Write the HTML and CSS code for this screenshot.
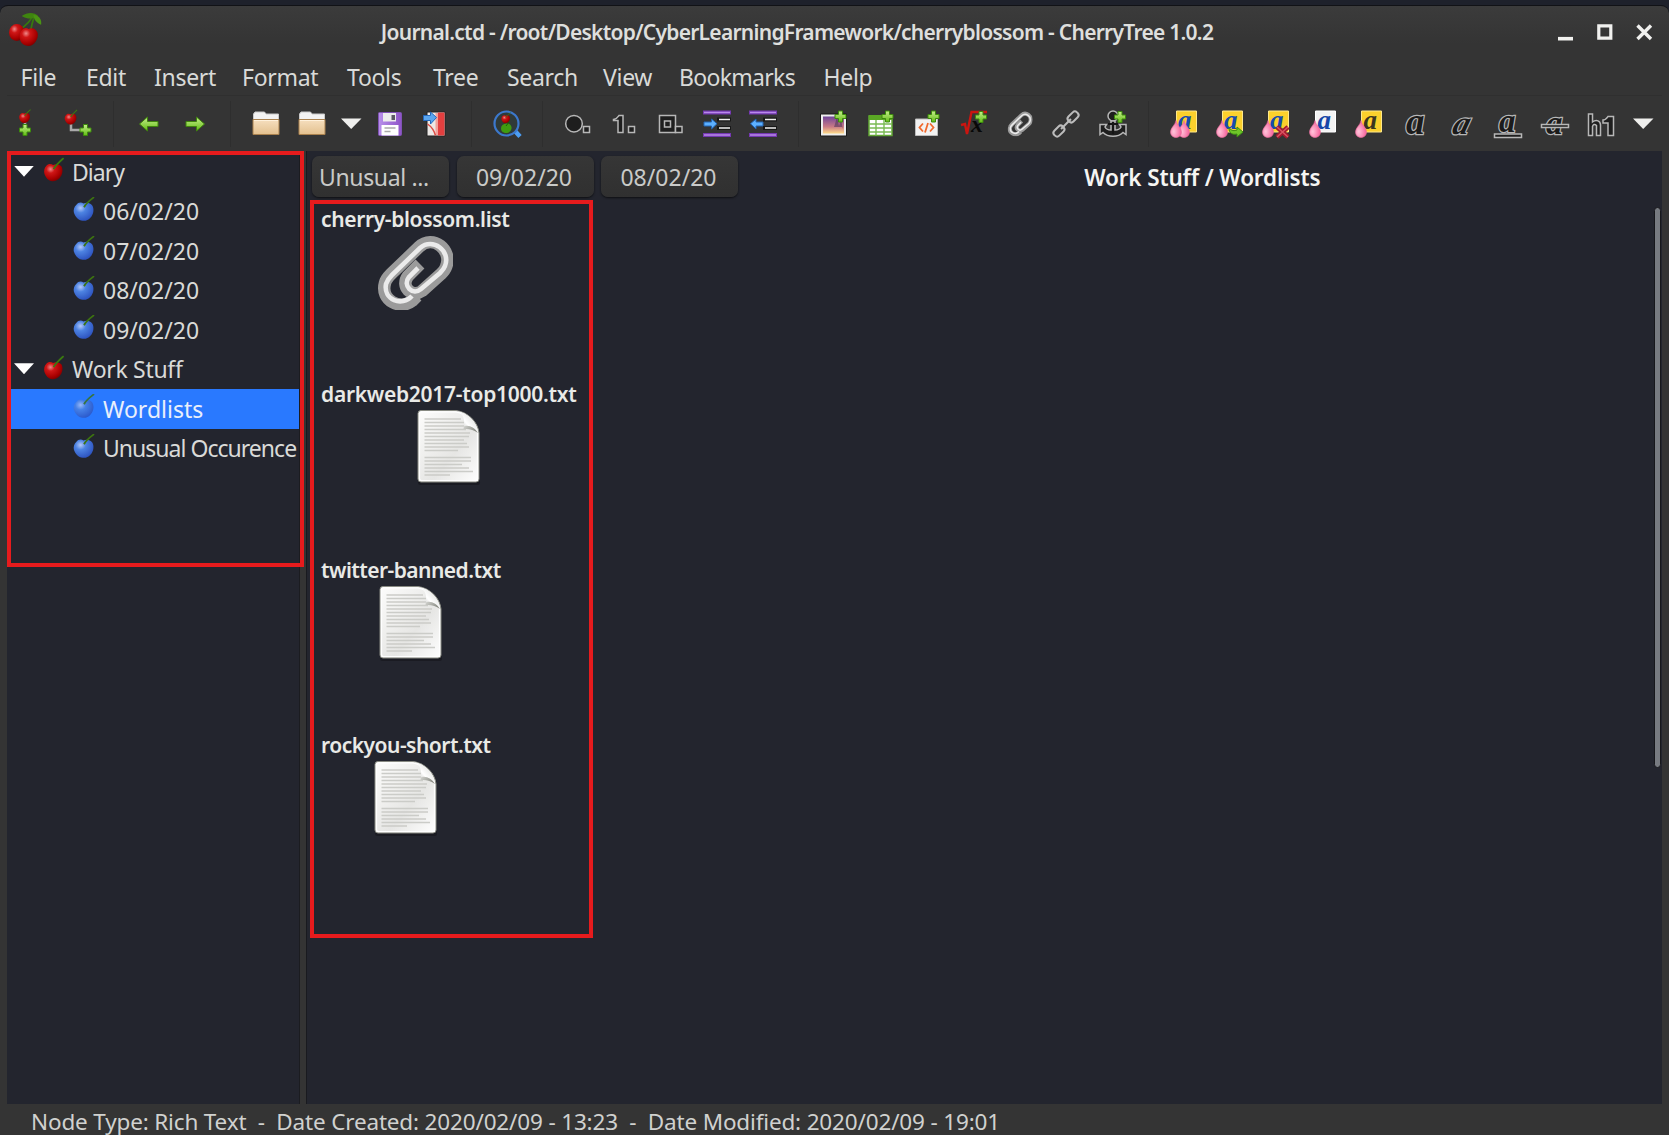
FILE: index.html
```
<!DOCTYPE html>
<html lang="en">
<head>
<meta charset="utf-8">
<title>Journal.ctd - CherryTree 1.0.2</title>
<link rel="stylesheet" href="styles.css">
</head>
<body>
<svg class="defs" aria-hidden="true">
  <defs>
    <radialGradient id="gRed" cx=".35" cy=".3" r=".75"><stop offset="0" stop-color="#f08a8a"/><stop offset=".3" stop-color="#cf1616"/><stop offset=".75" stop-color="#a80000"/><stop offset="1" stop-color="#700"/></radialGradient>
    <radialGradient id="gBlue" cx=".35" cy=".3" r=".75"><stop offset="0" stop-color="#b4c9f8"/><stop offset=".35" stop-color="#4d83e2"/><stop offset="1" stop-color="#2b50bd"/></radialGradient>
    <radialGradient id="gPink" cx=".3" cy=".65" r=".6"><stop offset="0" stop-color="#ffc4da"/><stop offset="1" stop-color="#f76da2"/></radialGradient>
    <linearGradient id="gGreen" x2="0" y2="1"><stop offset="0" stop-color="#c6ee8c"/><stop offset="1" stop-color="#62bd14"/></linearGradient>
    <linearGradient id="gFolder" x2="0" y2="1"><stop offset="0" stop-color="#f6dfbf"/><stop offset="1" stop-color="#e3c08e"/></linearGradient>
    <linearGradient id="gImg" x2="0" y2="1"><stop offset="0" stop-color="#70459a"/><stop offset=".6" stop-color="#c97a86"/><stop offset="1" stop-color="#ffdc8a"/></linearGradient>
    <linearGradient id="gPage" x2="1" y2="1"><stop offset="0" stop-color="#fdfdfc"/><stop offset=".6" stop-color="#e6e6e4"/><stop offset="1" stop-color="#fff"/></linearGradient>
    <linearGradient id="gFold" x1="0" y1=".6" x2=".7" y2="0"><stop offset="0" stop-color="#c4c5c1"/><stop offset=".4" stop-color="#fff"/><stop offset="1" stop-color="#dcddda"/></linearGradient>
    <linearGradient id="gShade" x2="1" y2=".4"><stop offset="0" stop-color="#d4d5d1"/><stop offset="1" stop-color="#85877f"/></linearGradient>
    <linearGradient id="gPurple" x2="1" y2="0"><stop offset="0" stop-color="#b890ea"/><stop offset="1" stop-color="#8e54c8"/></linearGradient>
    <symbol id="plus" viewBox="0 0 14 14"><path d="M5 1.500h4V5h3.500v4H9v3.500H5V9H1.500V5H5z" fill="url(#gGreen)" stroke="#3c8a0c"/></symbol>
    <symbol id="cherry" viewBox="0 0 24 28"><path d="M3.500 9.500C5.500 7 9 7 11 8.500c3-1.600 6.500-1 9 1.500 2.200 3.500 1.500 9.500-2 13-2.500 2.700-5.500 3.500-8 3.200C6 25.800 3 22.500 1.500 18c-.8-3 0-6.500 2-8.500z" fill="url(#gRed)"/><path d="M11.500 13C14 8.500 17 6 22.500 1" fill="none" stroke="#3a7a10" stroke-width="1.900"/></symbol>
    <symbol id="berry" viewBox="0 0 24 28"><path d="M3.500 8.500C5.500 5.500 9 5 11.500 7c3-1.800 7-1.200 9.500 2 2.200 3.500 1.800 9.500-2 13.500-2.700 3-5.500 3.700-8.500 3.200C6 25.500 2.500 21.500 1 17c-.8-3 .3-6.500 2.500-8.500z" fill="url(#gBlue)"/><path d="M12 11c2-4 5-6.500 11-11" fill="none" stroke="#3d7410" stroke-width="1.900"/></symbol>
    <symbol id="drop" viewBox="0 0 12 18"><path d="M6 .5C6.500 5 11.500 7.500 11.500 12c0 3.300-2.500 5.500-5.500 5.500S.5 15.300.5 12C.5 7.500 5.500 5 6 .5z" fill="url(#gPink)" stroke="#e8689a" stroke-width=".6"/></symbol>
    <symbol id="folder" viewBox="0 0 28 28"><path d="M1.500 4 3 2h9.500l1.500 2h12.500v9h-25z" fill="#f3f3f3" stroke="#c9c9c9"/><path d="M1 9.500h26V24.500H1z" fill="url(#gFolder)" stroke="#a9814e"/><path d="M2 10.500h24" stroke="#fff1dc"/></symbol>
    <symbol id="clip" viewBox="0 0 76 76"><g fill="none"><path d="M40 62L35 67C24 76 3 67 8 49c1-4 3-6 6-9l28-27C56 0 76 16 69 33c-1 3-3 5-5 7L45 57C35 64 23 53 31 42l12-12" stroke="#9b9b9b" stroke-width="12.500"/><path d="M35 62C25 73 6 66 9 50c1-3 3-6 6-9l28-27C56 3 74 17 68 32c-1 3-3 5-5 7L44 55C36 62 25 52 32 43l9-9" stroke="#ebebeb" stroke-width="4.600"/></g></symbol>
    <symbol id="doc" viewBox="0 0 66 78"><rect x="2" y="71" width="62" height="5" rx="2.500" fill="#1a1b22"/><path d="M5 1.500h35C52 3 62 13 63 24v46q0 3-3 3H5q-3 0-3-3V4.500q0-3 3-3z" fill="url(#gPage)" stroke="#888a82"/><path d="M5.500 3H40C51 5 60 14 61.500 24v45.500q0 2-2 2h-54q-2 0-2-2V5q0-2 2-2z" fill="none" stroke="#fff" stroke-width="1.200"/><path d="M8.500 10H45M8.500 13.500H48M8.500 17H49M8.500 20.500H50M8.500 24H54M8.500 27.500H53M8.500 31H48M8.500 34.500H51M8.500 38H53M8.500 41.500H42M8.500 48.500H55M8.500 52H55M8.500 55.500H46M8.500 59H53M8.500 62.500H57M8.500 66H34" stroke="#cbccc8" stroke-width="1.400"/><path d="M41 2C48 5 48.500 10 48 17.500c5-1 10 1 14 6C60 12 52 4 41 2z" fill="url(#gFold)"/><path d="M47.500 20c0-1.500.3-2.500 1.500-3 5-1 10 2 13 7-4-3-9-4.500-14.500-4z" fill="url(#gShade)"/></symbol>
    <symbol id="yellowA" viewBox="0 0 28 28"><path d="M6.500 1h20v21h-20z" fill="#fbd02c" stroke="#ffe889"/><text x="8" y="18.500" class="ga" fill="#174bab">a</text></symbol>
  </defs>
</svg>

<div class="window">
  <header class="titlebar">
    <svg class="logo" viewBox="0 0 36 36"><path d="M11 17C17 13 22 9 24 3M22 20c1-6 2-11 4-16" fill="none" stroke="#37790d" stroke-width="1.800"/><path d="M13 3c6-4 13-4 17 0-5 3-10 4-17 0z" fill="#3f850f"/><path d="M25 2c6 0 9 5 8 10-5-2-7-5-8-10z" fill="#4a9413"/><ellipse cx="8" cy="20" rx="8" ry="8.700" fill="url(#gRed)"/><path d="M13 18c3-3 5-3 7-1.500 4-2 8 0 9.500 4 1 6-3 13-9.500 13.500-5 0-9-4-9-9 0-3 0-5 2-7z" fill="url(#gRed)"/></svg>
    <h1 class="title">Journal.ctd - /root/Desktop/CyberLearningFramework/cherryblossom - CherryTree 1.0.2</h1>
    <div class="controls">
      <svg viewBox="0 0 90 18"><path d="M1 15.700h15" stroke="#f1f1ef" stroke-width="3.600"/><path d="M41.800 2.800h12v12.400h-12z" fill="none" stroke="#f1f1ef" stroke-width="3.200"/><path d="M80.500 2.500 94 16M94 2.500 80.500 16" stroke="#f1f1ef" stroke-width="3.400"/></svg>
    </div>
  </header>

  <nav class="menubar"><span>File</span><span>Edit</span><span>Insert</span><span>Format</span><span>Tools</span><span>Tree</span><span>Search</span><span>View</span><span class="tight">Bookmarks</span><span>Help</span></nav>

  <div class="toolbar">
    <svg class="t" viewBox="0 0 28 28"><path d="M8 12v6" stroke="#aaa" stroke-width="2.500"/><use href="#cherry" x="1" y="-1" width="14" height="15"/><use href="#plus" x="1" y="13" width="14" height="14"/></svg>
    <svg class="t" viewBox="0 0 28 28"><path d="M7 12v8h9" stroke="#aaa" stroke-width="2.500" fill="none"/><use href="#cherry" x="0" y="-1" width="14" height="17"/><use href="#plus" x="14.500" y="13" width="14" height="14"/></svg>
    <i></i>
    <svg class="t" viewBox="0 0 28 28"><path d="M4.500 14l8-7v4.500H23v5H12.500V21z" fill="url(#gGreen)" stroke="#3f830d"/></svg>
    <svg class="t" viewBox="0 0 28 28"><path d="M23.500 14l-8-7v4.500H5v5h10.500V21z" fill="url(#gGreen)" stroke="#3f830d"/></svg>
    <i></i>
    <svg class="t" viewBox="0 0 28 28"><use href="#folder"/></svg>
    <svg class="t" viewBox="0 0 28 28"><use href="#folder"/></svg>
    <svg class="t narrow" viewBox="0 0 28 28"><path d="M4 8.500h20.500L14.200 19z" fill="#efefed"/></svg>
    <svg class="t" viewBox="0 0 28 28"><rect x="2.500" y="2.500" width="23" height="23" rx="1" fill="url(#gPurple)" stroke="#8052b5"/><path d="M7 3h13v8.500H7z" fill="#ececec"/><path d="M15.500 5h3.500v5h-3.500z" fill="#5b5964"/><path d="M5.500 15h17v10.500h-17z" fill="#fff"/><path d="M8.500 18h11M8.500 21.500h6" stroke="#aaa" stroke-width="1.300"/></svg>
    <svg class="t" viewBox="0 0 28 28"><path d="M5 2h18v24H5z" fill="#ece8e6" stroke="#222"/><path d="M16 2.500h6.500v23H16z" fill="#e33f3f"/><path d="M13.500 3h2.500v22h-2.500z" fill="#f2a09a"/><path d="M5.500 14C10 17 12 20 13.500 25.500" stroke="#dc4d45" stroke-width="1.500" fill="none"/><path d="M14.500 7.500 8.500 2v3.500H1.500v5h7V14z" fill="#5aa5ef" stroke="#2468bb"/></svg>
    <i></i>
    <svg class="t" viewBox="0 0 28 28"><path d="M21.500 20.500l5.500 6" stroke="#4c9df3" stroke-width="4.500"/><circle cx="13.500" cy="13.500" r="12" fill="#303a38" stroke="#3c78cc" stroke-width="2.200"/><use href="#cherry" x="7.500" y="2" width="11" height="12"/><path d="M13.500 13.500c3-.5 5.500 2 5 5s-3 4.500-5.500 4.500-5-1.500-5-4.500 2-4.500 5.500-5z" fill="#3f9b10"/><path d="M13 16l3-4" stroke="#1e6200"/></svg>
    <i></i>
    <svg class="t mono" viewBox="0 0 28 28"><circle cx="10" cy="13.700" r="8.300"/><path d="M19.500 16.500h6v6h-6z"/></svg>
    <svg class="t" viewBox="0 0 28 28"><path class="ln" d="M3.500 9.500C7 9 8 7 9 5.500h4v17H8v-12H3.500z"/><path class="ln" d="M18.500 16.500h6v6h-6z"/></svg>
    <svg class="t mono" viewBox="0 0 28 28"><path d="M2.500 5.500h16v17h-16z"/><path d="M7.500 11h6v6h-6z"/><path d="M18.500 16.500h6.500v6h-6.500z"/></svg>
    <svg class="t" viewBox="0 0 28 28"><path d="M0 2.500h28M0 25h28" stroke="#7538b2" stroke-width="4"/><path d="M1 2.500h26M1 25h26" stroke="#b889e9"  stroke-width="1.500"/><path d="M14 9.500h14M14 18h14" stroke="#181818" stroke-width="4"/><path d="M16 9.500h11M16 18h11" stroke="#eee" stroke-width="1.700"/><path d="M14 13.700 8.500 9v3H1v4h7.500v3z" fill="#5db0ff" stroke="#2364b4"/></svg>
    <svg class="t" viewBox="0 0 28 28"><path d="M0 2.500h28M0 25h28" stroke="#7538b2" stroke-width="4"/><path d="M1 2.500h26M1 25h26" stroke="#b889e9" stroke-width="1.500"/><path d="M14 9.500h14M14 18h14" stroke="#181818" stroke-width="4"/><path d="M16 9.500h11M16 18h11" stroke="#eee" stroke-width="1.700"/><path d="M1.500 13.700 7 9v3h7v4H7v3z" fill="#5db0ff" stroke="#2364b4"/></svg>
    <i></i>
    <svg class="t" viewBox="0 0 28 28"><path d="M.5 4h26v22H.5z" fill="#eee" stroke="#191919"/><path d="M3 6.500h21v17H3z" fill="url(#gImg)"/><path d="M15 14l2-7 2 9 2-6 2 9v-2H14z" fill="#493258" opacity=".55"/><use href="#plus" x="13.500" y="-.5" width="14" height="14"/></svg>
    <svg class="t" viewBox="0 0 28 28"><path d="M2 6h23v19.500H2z" fill="#fff" stroke="#62a634" stroke-width="1.500"/><path d="M2 5h23v5H2z" fill="#5aa724"/><path d="M2 14h23M2 18h23M2 22h23M9 10v15.500M17 10v15.500" stroke="#79bb53" stroke-width="1.400"/><use href="#plus" x="13.500" y="-.5" width="14" height="14"/></svg>
    <svg class="t" viewBox="0 0 28 28"><path d="M2.500 9h22v16.500h-22z" fill="#f2f2f2" stroke="#bbb"/><path d="M10 13.500l-3.500 4 3.500 4M17 13.500l3.500 4-3.500 4M15 13l-3 9.500" fill="none" stroke="#f0692d" stroke-width="1.800"/><use href="#plus" x="13.500" y="-.5" width="14" height="14"/></svg>
    <svg class="t" viewBox="0 0 28 28"><path d="M1 15l4-1 2 10L11.500 2H27" fill="none" stroke="#ca1510" stroke-width="2.400"/><text x="11" y="22" class="ga sm" fill="#080808">x</text><use href="#plus" x="14" y="0" width="14" height="14"/></svg>
    <svg class="t" viewBox="0 0 76 76"><use href="#clip" x="4" y="3" width="68" height="68"/></svg>
    <svg class="t link" viewBox="0 0 28 28"><g><rect x="-3.500" y="-16" width="7" height="12" rx="3"/><rect x="-3.500" y="4" width="7" height="12" rx="3"/><path d="M0-7V7"/></g></svg>
    <svg class="t" viewBox="0 0 28 28"><circle cx="14" cy="6" r="5" class="ln"/><path class="ln" d="M12 11h4v9c3 0 5-1 6-3l-1.500-2.500h6.500v10l-3-2c-5 5-15 5-20 0l-3 2v-10h6.500L6 17c1 2 3 3 6 3z"/><path d="M9 14h10M14 12v12" stroke="#151515" stroke-width="2"/><use href="#plus" x="14" y="0" width="14" height="14"/></svg>
    <i></i>
    <svg class="t" viewBox="0 0 28 28"><use href="#yellowA"/><use href="#drop" x="8" y="10" width="12" height="18"/><use href="#drop" x="0" y="10" width="12" height="18"/></svg>
    <svg class="t" viewBox="0 0 28 28"><use href="#yellowA"/><use href="#drop" x="0" y="10" width="12" height="18"/><path d="M13 18c3 3 5 3 8 2v-3l6 5-6 5v-3c-5 1-8-1-8-6z" fill="#6fc629" stroke="#3a8a12"/></svg>
    <svg class="t" viewBox="0 0 28 28"><use href="#yellowA"/><use href="#drop" x="0" y="10" width="12" height="18"/><path d="M15 17l11 10M26 17L15 27" stroke="#a31a2e" stroke-width="4.500"/><path d="M15 17l11 10M26 17L15 27" stroke="#d95462" stroke-width="1.500"/></svg>
    <svg class="t" viewBox="0 0 28 28"><path d="M6.500 1h20v21h-20z" fill="#f3f3f3" stroke="#fff"/><text x="8.500" y="18.500" class="ga" fill="#1746a8">a</text><use href="#drop" x="0" y="10" width="12" height="18"/></svg>
    <svg class="t" viewBox="0 0 28 28"><path d="M6.500 1h20v21h-20z" fill="#fbd02c" stroke="#ffe889"/><text x="8.500" y="18.500" class="ga" fill="#3b3520">a</text><use href="#drop" x="0" y="10" width="12" height="18"/></svg>
    <svg class="t" viewBox="0 0 28 28"><text x="4" y="24" class="ga out heavy">a</text></svg>
    <svg class="t" viewBox="0 0 28 28"><text x="3" y="24" class="ga out slant">a</text></svg>
    <svg class="t" viewBox="0 0 28 28"><text x="5" y="21.500" class="ga out">a</text><path class="ln" d="M.5 24h27v3.500H.5z"/></svg>
    <svg class="t" viewBox="0 0 28 28"><text x="5" y="24" class="ga out">a</text><path class="ln" d="M.5 14.500h27v3H.5z"/></svg>
    <svg class="t" viewBox="0 0 28 28"><path class="ln" d="M1.500 4h4v8c4-3 8-1 8 3v10.500H9.500v-10c-2-2-3.500-1-4 1v9h-4zM16 10c3 0 4-2 5-3.500h5.500v19h-5.500v-12.500h-5z"/></svg>
    <svg class="t narrow" viewBox="0 0 28 28"><path d="M4 8.500h20.500L14.200 19z" fill="#efefed"/></svg>
  </div>

  <main class="workspace">
    <aside class="tree">
      <div class="row parent"><b class="arrow"></b><svg><use href="#cherry"/></svg><span class="n-diary">Diary</span></div>
      <div class="row"><svg><use href="#berry"/></svg><span>06/02/20</span></div>
      <div class="row"><svg><use href="#berry"/></svg><span>07/02/20</span></div>
      <div class="row"><svg><use href="#berry"/></svg><span>08/02/20</span></div>
      <div class="row"><svg><use href="#berry"/></svg><span>09/02/20</span></div>
      <div class="row parent"><b class="arrow"></b><svg><use href="#cherry"/></svg><span class="n-work">Work Stuff</span></div>
      <div class="row selected"><svg><use href="#berry"/></svg><span>Wordlists</span></div>
      <div class="row"><svg><use href="#berry"/></svg><span class="n-unusual">Unusual Occurence</span></div>
    </aside>
    <section class="editor">
      <div class="editor-head">
        <button class="tab first">Unusual ...</button><button class="tab">09/02/20</button><button class="tab">08/02/20</button>
        <h2 class="path">Work Stuff / Wordlists</h2>
      </div>
      <div class="files">
        <figure><figcaption class="f1">cherry-blossom.list</figcaption><svg class="clip"><use href="#clip"/></svg></figure>
        <figure><figcaption class="f2">darkweb2017-top1000.txt</figcaption><svg class="doc"><use href="#doc"/></svg></figure>
        <figure><figcaption class="f3">twitter-banned.txt</figcaption><svg class="doc"><use href="#doc"/></svg></figure>
        <figure><figcaption class="f4">rockyou-short.txt</figcaption><svg class="doc"><use href="#doc"/></svg></figure>
      </div>
      <div class="scrollbar"></div>
    </section>
    <div class="mark mark-tree"></div>
    <div class="mark mark-files"></div>
  </main>

  <footer class="status">Node Type: Rich Text  -  Date Created: 2020/02/09 - 13:23  -  Date Modified: 2020/02/09 - 19:01</footer>
</div>
</body>
</html>
```
FILE: styles.css
```
* { box-sizing: border-box; }
html, body { margin: 0; height: 100%; overflow: hidden; background: #1e212b; }
body { padding-top: 5px; font: 23px "Noto Sans", sans-serif; color: #d9dad8; }
h1, h2, figure { margin: 0; font-weight: 600; }
.defs { position: absolute; width: 0; height: 0; }

.window {
  height: 1130px;
  display: flex;
  flex-direction: column;
  border-top: 1px solid #111216;
  border-radius: 8px 8px 0 0;
  background: linear-gradient(#3b3b3b, #343434 38px);
}

.titlebar {
  flex: none;
  height: 53px;
  padding: 6px 22px 0 9px;
  display: grid;
  grid-template-columns: 90px 1fr 90px;
}
.logo { width: 35px; height: 35px; margin-top: 1px; }
.title {
  font-size: 21px;
  line-height: 40px;
  letter-spacing: -.73px;
  text-align: center;
  white-space: pre;
  color: #dedfdd;
  padding-right: 62px;
}
.controls { padding-top: 11px; }
.controls svg { width: 90px; height: 18px; overflow: visible; display: block; }

.menubar {
  flex: none;
  height: 37px;
  margin: 0 7px;
  padding-left: 13.500px;
  display: grid;
  grid-template-columns: 65.500px 68px 88px 105px 86px 74px 96px 76px 144.500px auto;
  line-height: 36px;
  letter-spacing: -.3px;
  border-bottom: 1px solid #2f2f2f;
}
.tight { letter-spacing: -.7px; }

.toolbar {
  flex: none;
  height: 55px;
  padding: 1px 0 0 8px;
  display: flex;
  align-items: center;
}
.t { flex: none; width: 28px; height: 28px; margin: 0 9.200px; overflow: visible; }
.t.narrow { width: 28px; margin: 0 1.500px; }
.toolbar > .t.narrow:last-child { margin-left: 5px; }
.toolbar i { flex: none; width: 1px; height: 46px; margin: 0 11.800px; background: #2e2e2e; }
.ln, .mono > * { fill: #1e1e1e; stroke: #b7b7b7; stroke-width: 1.500px; }
.ga { font: italic bold 27px "Liberation Serif", serif; }
.ga.sm { font-size: 24px; }
.ga.out { font-size: 33px; fill: #1b1b1b; stroke: #b7b7b7; stroke-width: 2.400px; paint-order: stroke; }
.ga.heavy { font-size: 37px; }
.ga.slant { transform: translateX(7px) skewX(-16deg); }
.link g { transform: translate(14px, 14px) rotate(45deg); fill: none; stroke: #bcbcbc; stroke-width: 2px; }

.workspace {
  position: relative;
  flex: none;
  height: 953px;
  padding: 0 7px;
  display: grid;
  grid-template-columns: 293px 1fr;
  column-gap: 6px;
}
.tree, .editor { background: #23252e; }
.tree { overflow: hidden; padding-top: 1px; border-right: 1px solid #1b1c20; }
.row {
  height: 39.500px;
  padding-left: 66px;
  display: flex;
  align-items: center;
  white-space: nowrap;
}
.row.parent { padding-left: 7px; }
.row svg { flex: none; width: 22px; height: 26px; margin: -3px 8px 0 0; }
.row.parent svg { margin: -3px 7px 0 9px; }
.row.selected { background: #2979ff; color: #e9effb; }
.row.selected svg { opacity: .8; }
.arrow { width: 20px; height: 11px; margin-top: -1px; background: #fff; clip-path: polygon(0 0, 100% 0, 50% 100%); }
.n-diary { letter-spacing: -1px; }
.n-work { letter-spacing: -.3px; }
.n-unusual { letter-spacing: -.98px; }

.editor { position: relative; border-left: 1px solid #191a1f; }
.editor-head {
  height: 49px;
  padding: 5px 0 0 5px;
  display: flex;
  gap: 7.500px;
}
.tab {
  width: 137px;
  height: 41px;
  padding: 0 2px 0 0;
  border: 0;
  border-radius: 7px;
  background: linear-gradient(#363636, #303030);
  box-shadow: 0 1px 2px #0e0f12;
  font: inherit;
  line-height: 42px;
  color: #c9cac8;
}
.tab.first { padding-left: 7px; text-align: left; letter-spacing: -.35px; }
.path {
  flex: 1;
  margin-right: 3px;
  text-align: center;
  font-size: 22.500px;
  line-height: 43px;
  letter-spacing: -.14px;
  color: #f5f5f3;
}
.files { padding: 4px 0 0 14px; }
.files figure {
  width: max-content;
  height: 175.400px;
  display: flex;
  flex-direction: column;
  align-items: center;
  font-size: 21px;
  line-height: 30px;
  color: #e9eae7;
}
.files svg { display: block; }
.clip { width: 76px; height: 76px; }
.doc { width: 66px; height: 78px; }
.f1 { letter-spacing: -.35px; }
.f2 { letter-spacing: -.27px; }
.f3 { letter-spacing: -.54px; }
.f4 { letter-spacing: -.5px; }
.scrollbar {
  position: absolute;
  top: 56px;
  right: 1px;
  width: 7px;
  height: 561px;
  border: 1px solid #17181c;
  border-radius: 4px;
  background: #777b81;
}

.mark { position: absolute; border: 4px solid #e61b1d; }
.mark-tree { left: 7px; top: 0; width: 297px; height: 416px; }
.mark-files { left: 310px; top: 49px; width: 283px; height: 738px; }

.status {
  flex: 1;
  min-height: 0;
  padding-left: 31px;
  font-size: 22.500px;
  line-height: 35px;
  letter-spacing: -.16px;
  white-space: pre;
  color: #d0d1cf;
}
```
